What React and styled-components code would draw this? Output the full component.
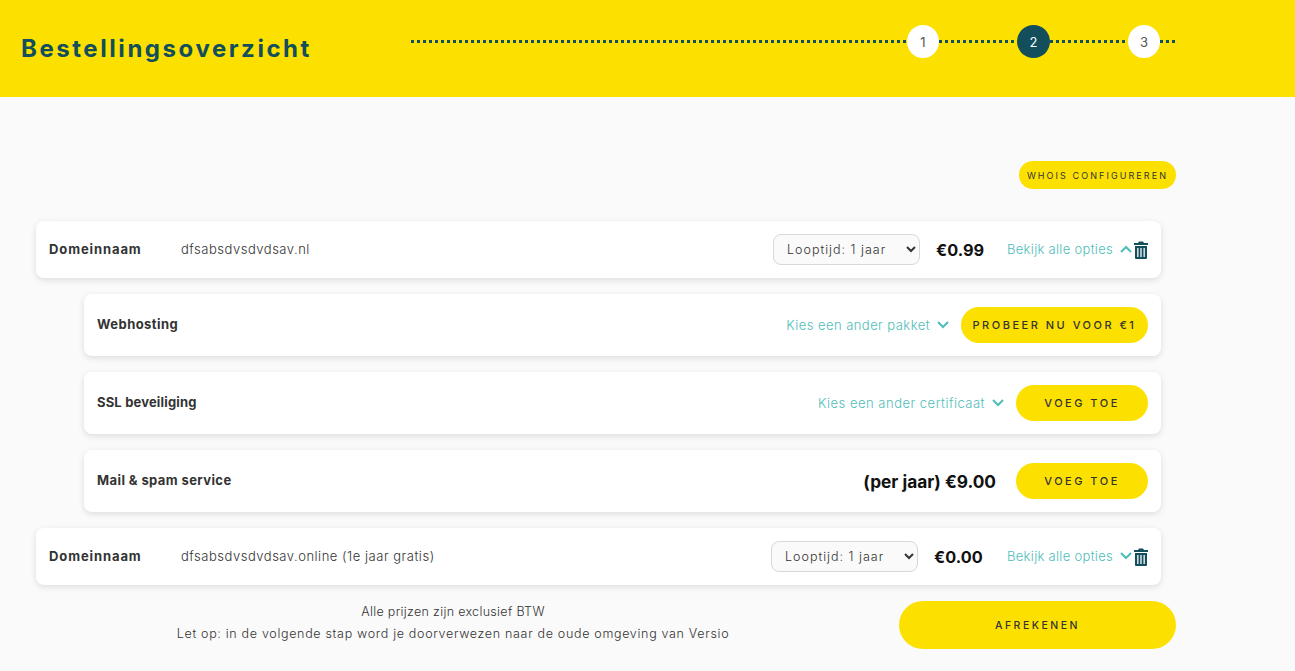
import styled, { createGlobalStyle } from "styled-components";

const GlobalStyle = createGlobalStyle`
html, body {
  margin: 0;
  padding: 0;
  background: #fafafa;
  font-family: "Inter", "Liberation Sans", sans-serif;
  color: #333;
}
* { box-sizing: border-box; }
`;

const Header = styled.header`
  height: 97px;
  background: #fce100;
  display: flex;
  padding-left: 21px;
`;
const Title = styled.h1`
  width: 390px;
  margin: 0;
  padding-top: 33px;
  font-size: 24px;
  line-height: 32px;
  font-weight: 700;
  letter-spacing: 2.55px;
  color: #124e5b;
`;
const Stepper = styled.div`
  display: flex;
  align-items: flex-start;
  height: 33px;
  margin-top: 25px;
`;
const Dots = styled.div`
  width: ${(p) => p.$width}px;
  height: 3px;
  margin-top: 15px;
  background: repeating-linear-gradient(90deg, #124e5b 0 3px, transparent 3px 6px);
`;
const Step = styled.div`
  width: ${(p) => (p.$active ? 33 : 32)}px;
  height: 33px;
  border-radius: 50%;
  display: flex;
  align-items: center;
  justify-content: center;
  font-size: 13px;
  background: ${(p) => (p.$active ? "#124e5b" : "#fff")};
  color: ${(p) => (p.$active ? "#fff" : "#555")};
`;

const Main = styled.main`
  width: 1176px;
  padding: 64px 0 0 36px;
  display: flex;
  flex-direction: column;
`;
const Pill = styled.button`
  align-self: flex-end;
  height: 28px;
  width: 157px;
  padding: 0;
  border: none;
  border-radius: 14px;
  background: #fce100;
  font-family: inherit;
  font-size: 9px;
  letter-spacing: 2.08px;
  color: #333;
  margin-bottom: 32px;
`;
const List = styled.div`
  width: 1125px;
  display: flex;
  flex-direction: column;
  gap: 16px;
`;
const Card = styled.div`
  height: ${(p) => (p.$sub ? 62 : 57)}px;
  margin-left: ${(p) => (p.$sub ? 48 : 0)}px;
  padding: 0 13px;
  background: #fff;
  border-radius: 8px;
  box-shadow: 0 2px 6px rgba(0, 0, 0, 0.12);
  display: flex;
  align-items: center;
`;
const Label = styled.div`
  font-size: 13px;
  font-weight: 700;
  color: #333;
  padding-bottom: 2px;
  letter-spacing: ${(p) => p.$track}px;
  width: ${(p) => (p.$wide ? "auto" : "132px")};
`;
const Domain = styled.div`
  font-size: 13px;
  font-weight: 300;
  color: #333;
  padding-bottom: 2px;
  letter-spacing: 0.52px;
`;
const Spacer = styled.div`
  flex: 1;
`;
const Term = styled.select`
  width: 147px;
  height: 31px;
  padding: 0 9px;
  border: 1px solid #d8d8d8;
  border-radius: 8px;
  background-color: #fafafa;
  font-family: inherit;
  font-size: 12.5px;
  font-weight: 300;
  letter-spacing: 1px;
  color: #333;
  margin-right: 16px;
`;
const Price = styled.div`
  font-size: 16.3px;
  font-weight: 700;
  color: #111;
  width: ${(p) => p.$width}px;
`;
const Options = styled.a`
  font-size: 13px;
  font-weight: 300;
  color: #4fbdb9;
  padding-bottom: 1px;
  letter-spacing: ${(p) => p.$track || 0.3}px;
  display: flex;
  align-items: center;
  gap: 7px;
  white-space: nowrap;
`;
const Chevron = styled.svg`
  width: 12px;
  height: 8px;
  fill: none;
  stroke: #4fbdb9;
  stroke-width: 2;
`;
const Trash = styled.svg`
  width: 14px;
  height: 18px;
  margin-left: 2px;
  fill: #124e5b;
`;
const Action = styled.button`
  height: 36px;
  width: ${(p) => p.$width}px;
  margin-left: 12px;
  padding: 0;
  border: none;
  border-radius: 18px;
  background: #fce100;
  font-family: inherit;
  font-size: 11px;
  font-weight: 500;
  letter-spacing: 2.5px;
  color: #333;
`;
const Offer = styled.div`
  font-size: 17.3px;
  font-weight: 700;
  color: #111;
  margin-right: 8px;
`;
const Footer = styled.div`
  display: flex;
  margin-top: 16px;
`;
const Notes = styled.div`
  width: 834px;
  font-size: 12.5px;
  font-weight: 300;
  line-height: 22px;
  text-align: center;
  color: #333;
`;
const Note = styled.div`
  letter-spacing: ${(p) => p.$track}px;
`;
const Checkout = styled.button`
  width: 277px;
  height: 48px;
  margin-left: 29px;
  padding: 0;
  border: none;
  border-radius: 24px;
  background: #fce100;
  font-family: inherit;
  font-size: 10.5px;
  font-weight: 500;
  letter-spacing: 2.5px;
  color: #333;
`;

function ChevronIcon({ up }) {
  return (
    <Chevron viewBox="0 0 12 8">
      <polyline points={up ? "1,7 6,2 11,7" : "1,1 6,6 11,1"} />
    </Chevron>
  );
}

function TrashIcon() {
  return (
    <Trash viewBox="0 0 14 18">
      <path d="M5 0.5h4l1 1.5h4v2H0V2h4z" />
      <path fillRule="evenodd" d="M1 5h12v12a1 1 0 0 1-1 1H2a1 1 0 0 1-1-1zM3.2 7v9h1.3V7zM6.35 7v9h1.3V7zM9.5 7v9h1.3V7z" />
    </Trash>
  );
}

export default function App() {
  return (
    <>
      <GlobalStyle />
      <Header>
        <Title>Bestellingsoverzicht</Title>
        <Stepper>
          <Dots $width={496} />
          <Step>1</Step>
          <Dots $width={78} />
          <Step $active>2</Step>
          <Dots $width={78} />
          <Step>3</Step>
          <Dots $width={16} />
        </Stepper>
      </Header>
      <Main>
        <Pill>WHOIS CONFIGUREREN</Pill>
        <List>
          <Card>
            <Label $track={0.9}>Domeinnaam</Label>
            <Domain>dfsabsdvsdvdsav.nl</Domain>
            <Spacer />
            <Term>
              <option>Looptijd: 1 jaar</option>
            </Term>
            <Price $width={71}>€0.99</Price>
            <Options>
              Bekijk alle opties <ChevronIcon up />
            </Options>
            <TrashIcon />
          </Card>
          <Card $sub>
            <Label $wide $track={0.45}>Webhosting</Label>
            <Spacer />
            <Options $track={0.45}>
              Kies een ander pakket <ChevronIcon />
            </Options>
            <Action $width={187}>PROBEER NU VOOR €1</Action>
          </Card>
          <Card $sub>
            <Label $wide $track={0.17}>SSL beveiliging</Label>
            <Spacer />
            <Options $track={0.5}>
              Kies een ander certificaat <ChevronIcon />
            </Options>
            <Action $width={132}>VOEG TOE</Action>
          </Card>
          <Card $sub>
            <Label $wide $track={0.4}>Mail &amp; spam service</Label>
            <Spacer />
            <Offer>(per jaar) €9.00</Offer>
            <Action $width={132}>VOEG TOE</Action>
          </Card>
          <Card>
            <Label $track={0.9}>Domeinnaam</Label>
            <Domain>dfsabsdvsdvdsav.online (1e jaar gratis)</Domain>
            <Spacer />
            <Term>
              <option>Looptijd: 1 jaar</option>
            </Term>
            <Price $width={73}>€0.00</Price>
            <Options>
              Bekijk alle opties <ChevronIcon />
            </Options>
            <TrashIcon />
          </Card>
        </List>
        <Footer>
          <Notes>
            <Note $track={0.32}>Alle prijzen zijn exclusief BTW</Note>
            <Note $track={0.68}>
              Let op: in de volgende stap word je doorverwezen naar de oude omgeving van Versio
            </Note>
          </Notes>
          <Checkout>AFREKENEN</Checkout>
        </Footer>
      </Main>
    </>
  );
}
